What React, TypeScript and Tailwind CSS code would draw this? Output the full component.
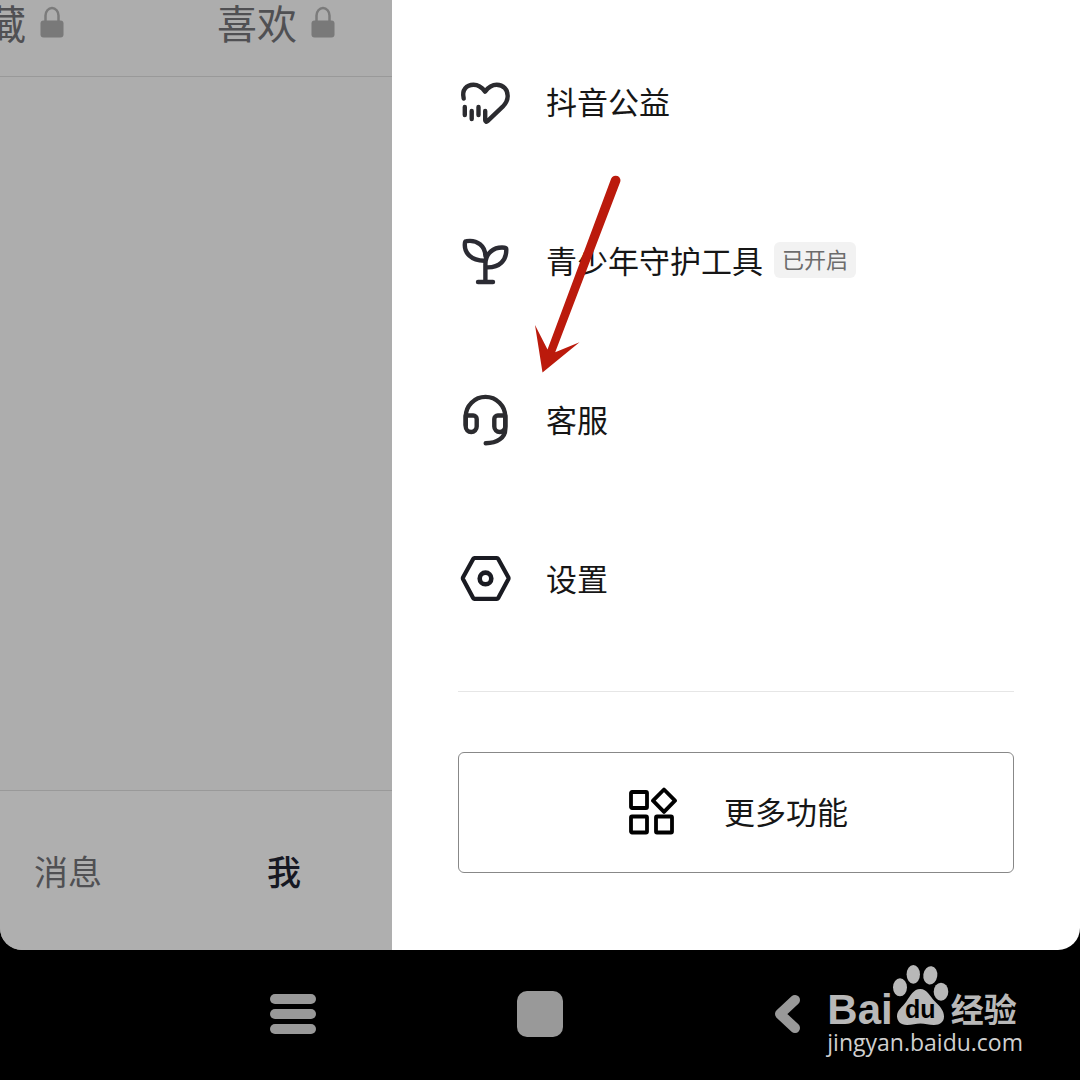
import React from "react";

function Lock() {
  return (
    <svg width="24" height="32" viewBox="0 0 24 32" fill="none" className="shrink-0">
      <path d="M5.500 17V9.500a6.500 7.500 0 0 1 13 0V17" stroke="#7b7b7b" strokeWidth="2.500" />
      <rect x="0.500" y="14.500" width="23" height="17" rx="3" fill="#797979" />
    </svg>
  );
}

function HeartIcon() {
  return (
    <svg width="54" height="54" viewBox="0 0 54 54" fill="none" stroke="#2b2b2f" strokeWidth="4.400" strokeLinecap="round" strokeLinejoin="round">
      <path d="M5.700 22.500C3.500 14 8.500 8.800 15.500 8.800c5 0 8.500 2.700 11.600 6.800 3.100-4.100 6.600-6.800 11.600-6.800 6.800 0 11 5 11 11.200 0 4.500-2 7.700-5 10.700L29.500 45.200c-1 .9-2.300.4-2.300-.9V35" />
      <path d="M6.800 31v8M13.700 35v8M20.500 31v8" />
    </svg>
  );
}

function SproutIcon() {
  return (
    <svg width="54" height="54" viewBox="0 0 54 54" fill="none" stroke="#2b2b33" strokeWidth="4.400" strokeLinecap="round" strokeLinejoin="round">
      <path d="M27 25.700C13.500 26 5.500 18 7 7.500c.1-.8.600-1.200 1.400-1.300C19.500 4.500 27.300 11 27.400 21" />
      <path d="M27.400 46V29c0-10.500 8-17.500 19.300-16.300 1 .1 1.600.7 1.600 1.700C48.500 25 42 33 28 32.300" />
      <path d="M20 47h15" />
    </svg>
  );
}

function HeadsetIcon() {
  return (
    <svg width="54" height="54" viewBox="0 0 54 54" fill="none" stroke="#2b2b2f" strokeWidth="4.400" strokeLinecap="round" strokeLinejoin="round">
      <path d="M7.700 31V22.700a19.800 19.800 0 0 1 39.600 0V35c0 8.500-8 14.300-19.600 14.300" />
      <path d="M7.700 21.500h7.500a3.500 3.500 0 0 1 3.500 3.500v7.500a5.500 5.500 0 0 1-11 0z" />
      <path d="M47.300 21.500h-7.500a3.500 3.500 0 0 0-3.500 3.500v7.500a5.500 5.500 0 0 0 11 0z" />
    </svg>
  );
}

function SettingsIcon() {
  return (
    <svg width="54" height="54" viewBox="0 0 54 54" fill="none" stroke="#1a1b22" strokeWidth="4.200" strokeLinejoin="round">
      <path d="M16.500 5h22.400q.8 0 1.200.7l10.200 18.600q.5 1 0 2L40.100 45.200q-.4.700-1.200.7H16.500q-.8 0-1.200-.7L5.100 26.300q-.5-1 0-2L15.300 5.700q.4-.7 1.200-.7z" />
      <circle cx="27.500" cy="25.400" r="5.800" strokeWidth="4.600" />
    </svg>
  );
}

function GridIcon() {
  return (
    <svg width="50" height="51" viewBox="0 0 50 51" fill="none" stroke="#000" strokeWidth="3.800" strokeLinejoin="round">
      <rect x="3" y="5" width="16" height="16" rx="1" />
      <rect x="3" y="29.500" width="16" height="16" rx="1" />
      <rect x="28" y="29.500" width="16" height="16" rx="1" />
      <path d="M36 2.500l11 11.200-11 11.200-11-11.200z" />
    </svg>
  );
}

function Paw() {
  return (
    <svg width="56" height="62" viewBox="0 0 56 62" fill="#b8b8b8" className="shrink-0">
      <ellipse cx="7" cy="23.300" rx="7" ry="9" />
      <ellipse cx="20.300" cy="10.300" rx="6.700" ry="9.400" />
      <ellipse cx="37.300" cy="11.300" rx="7" ry="9.200" transform="rotate(8 37.300 11.300)" />
      <ellipse cx="48" cy="27.700" rx="7.300" ry="9" />
      <path d="M27.300 25c6.700 0 9.500 7 14.700 12.500 5.500 5.300 9 9.500 9 15S47 61 41 61c-5 0-9-1.500-13.500-1.500S19 61 14 61C7.500 61 4 57 4 52c0-6 5.500-9 9-14 4.500-6.500 7.500-13 14.300-13z" />
      <text x="12" y="54" fill="#000" className="font-['Liberation_Sans',sans-serif] text-[25px] font-bold">du</text>
    </svg>
  );
}

const items = [
  { label: "抖音公益", icon: <HeartIcon /> },
  { label: "青少年守护工具", icon: <SproutIcon />, badge: "已开启" },
  { label: "客服", icon: <HeadsetIcon /> },
  { label: "设置", icon: <SettingsIcon /> },
];

function Profile() {
  return (
    <div className="flex w-[36.3%] flex-col bg-[#adadad]">
      <div className="flex h-[77px] items-start border-b border-[#999] text-[40px] leading-[44px] text-[#505053]">
        <button className="-ml-[14px] flex shrink-0 items-center gap-[14px]">
          藏
          <Lock />
        </button>
        <button className="ml-[153px] flex shrink-0 items-center gap-[14px]">
          喜欢
          <Lock />
        </button>
      </div>
      <div className="flex-1"></div>
      <nav className="flex h-40 items-center border-t border-[#999] bg-[#afafaf] text-[34px] leading-10">
        <button className="ml-[34px] text-[#505053]">消息</button>
        <button className="ml-[165px] font-medium text-[#161823]">我</button>
      </nav>
    </div>
  );
}

function Drawer() {
  return (
    <aside className="relative flex-1 bg-white px-[66px] pt-[76px] pb-[77px] text-[31px] leading-[50px] text-[#161616]">
      <ul className="flex flex-col gap-[105px]">
        {items.map((item) => (
          <li key={item.label}>
            <button className="flex h-[54px] items-start gap-[34px]">
              {item.icon}
              <span className="flex items-center gap-[11px]">
                {item.label}
                {item.badge && (
                  <span className="rounded-md bg-[#f2f2f2] px-2 pb-1 text-[22px] leading-8 text-[#6c6c6c]">{item.badge}</span>
                )}
              </span>
            </button>
          </li>
        ))}
      </ul>
      <hr className="mt-[84px] border-[#e6e6e6]" />
      <button className="mt-[60px] flex h-[121px] w-full items-center justify-center gap-[46px] rounded-md border border-[#888] pl-1">
        <GridIcon />
        <span className="pb-1">更多功能</span>
      </button>
      <svg width="96" height="206" viewBox="0 0 96 206" className="absolute top-[170px] left-[138px]">
        <path
          d="M12.500 202.500L5 155l12.500 24.500L81.200 8.500a4.700 4.700 0 0 1 8.800 4L25.200 182.200l24.300-10z"
          fill="#bb1a0c"
        />
      </svg>
    </aside>
  );
}

function SystemBar() {
  return (
    <footer className="relative flex h-[130px] items-center justify-between bg-black px-[25%] pb-[2px]">
      <button aria-label="Menu" className="flex w-[46px] flex-col gap-[5px]">
        <span className="h-[10px] rounded-full bg-[#999]"></span>
        <span className="h-[10px] rounded-full bg-[#999]"></span>
        <span className="h-[10px] rounded-full bg-[#999]"></span>
      </button>
      <button aria-label="Home" className="size-[46px] rounded-[10px] bg-[#999]"></button>
      <button aria-label="Back" className="flex w-[46px] justify-center">
        <svg width="28" height="40" viewBox="0 0 28 40" fill="none">
          <path d="M22 6L7 20l15 14" stroke="#999" strokeWidth="10" strokeLinecap="round" strokeLinejoin="round" />
        </svg>
      </button>
      <div className="absolute right-[57px] bottom-[22px]">
        <div className="flex items-end text-[#b8b8b8]">
          <span className="font-['Liberation_Sans',sans-serif] text-[42px] leading-8 font-bold">Bai</span>
          <Paw />
          <span className="pl-[2px] text-[33px] leading-9 font-bold">经验</span>
        </div>
        <a href="#" className="block font-['Open_Sans',sans-serif] text-[23px] leading-8 text-[#d0d0d0]">
          jingyan.baidu.com
        </a>
      </div>
    </footer>
  );
}

export default function App() {
  return (
    <div className="min-h-screen bg-black font-['Noto_Sans_CJK_SC',sans-serif]">
      <main className="flex overflow-hidden rounded-b-[22px]">
        <Profile />
        <Drawer />
      </main>
      <SystemBar />
    </div>
  );
}
